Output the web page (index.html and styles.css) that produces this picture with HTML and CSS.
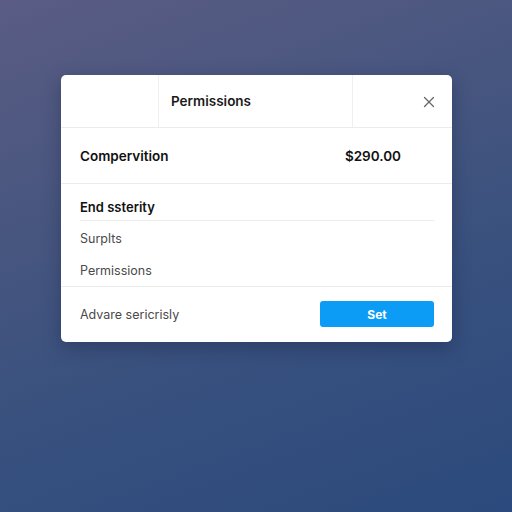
FILE: index.html
```html
<!DOCTYPE html>
<html>
<head>
<meta charset="utf-8">
<link rel="stylesheet" href="styles.css">
</head>
<body>
<div class="stage">
  <div class="dialog">
    <div class="header">
      <div class="hcell hleft"></div>
      <div class="hcell htitle">Permissions</div>
      <div class="hcell hclose">
        <svg width="12" height="12" viewBox="0 0 12 12"><path d="M1.5 1.5 L10.5 10.5 M10.5 1.5 L1.5 10.5" stroke="#666" stroke-width="1.3" stroke-linecap="round"/></svg>
      </div>
    </div>
    <div class="summary">
      <span class="sum-label">Compervition</span>
      <span class="sum-price">$290.00</span>
    </div>
    <div class="section">
      <div class="sec-title">End ssterity</div>
      <div class="item item-first">Surplts</div>
      <div class="item item-last">Permissions</div>
    </div>
    <div class="footer">
      <span class="foot-label">Advare sericrisly</span>
      <button class="btn">Set</button>
    </div>
  </div>
</div>
</body>
</html>
```

FILE: styles.css
```css
html, body {
  margin: 0;
  padding: 0;
  width: 512px;
  height: 512px;
  overflow: hidden;
}
body {
  font-family: Inter, "Noto Sans", Arial, sans-serif;
  background: linear-gradient(160deg, #5a5c84 0%, #47567f 35%, #37507e 65%, #2c4a7d 100%);
}
.stage {
  width: 512px;
  height: 512px;
  padding-top: 75px;
  padding-left: 61px;
  box-sizing: border-box;
}
.dialog {
  width: 391px;
  background: #fff;
  border-radius: 5px;
  box-shadow: 0 6px 18px rgba(20, 30, 60, 0.35);
  overflow: hidden;
}
.header {
  display: grid;
  grid-template-columns: 98px 194px 1fr;
  height: 52px;
  border-bottom: 1px solid #ececec;
}
.hcell {
  display: flex;
  align-items: center;
}
.hleft { border-right: 1px solid #efefef; }
.htitle {
  border-right: 1px solid #efefef;
  padding-left: 12px;
  font-size: 13.5px;
  font-weight: 600;
  color: #1a1a1a;
}
.hclose {
  justify-content: flex-end;
  padding-right: 17px;
  padding-top: 1px;
}
.summary {
  display: flex;
  justify-content: space-between;
  align-items: center;
  height: 55px;
  padding: 0 51px 0 19px;
  border-bottom: 1px solid #ececec;
  font-size: 13.5px;
  font-weight: 600;
  color: #111;
}
.section {
  padding: 0 18px 0 19px;
  border-bottom: 1px solid #ececec;
}
.sec-title {
  height: 37px;
  display: flex;
  align-items: flex-end;
  box-sizing: border-box;
  font-size: 13px;
  font-weight: 600;
  color: #111;
  border-bottom: 1px solid #ececec;
  padding-bottom: 5px;
}
.item {
  display: flex;
  align-items: center;
  font-size: 12.5px;
  color: #4a4a4a;
}
.item-first {
  margin-top: 2px;
  height: 31px;
}
.item-last { height: 32px; }
.footer {
  display: flex;
  justify-content: space-between;
  align-items: center;
  height: 55px;
  padding: 0 18px 0 19px;
  font-size: 12.5px;
  color: #4a4a4a;
}
.btn {
  width: 114px;
  height: 26px;
  border: none;
  border-radius: 3px;
  background: #0c9cf5;
  color: #fff;
  font-family: inherit;
  font-size: 12px;
  font-weight: 700;
  margin-bottom: 1px;
}
```
